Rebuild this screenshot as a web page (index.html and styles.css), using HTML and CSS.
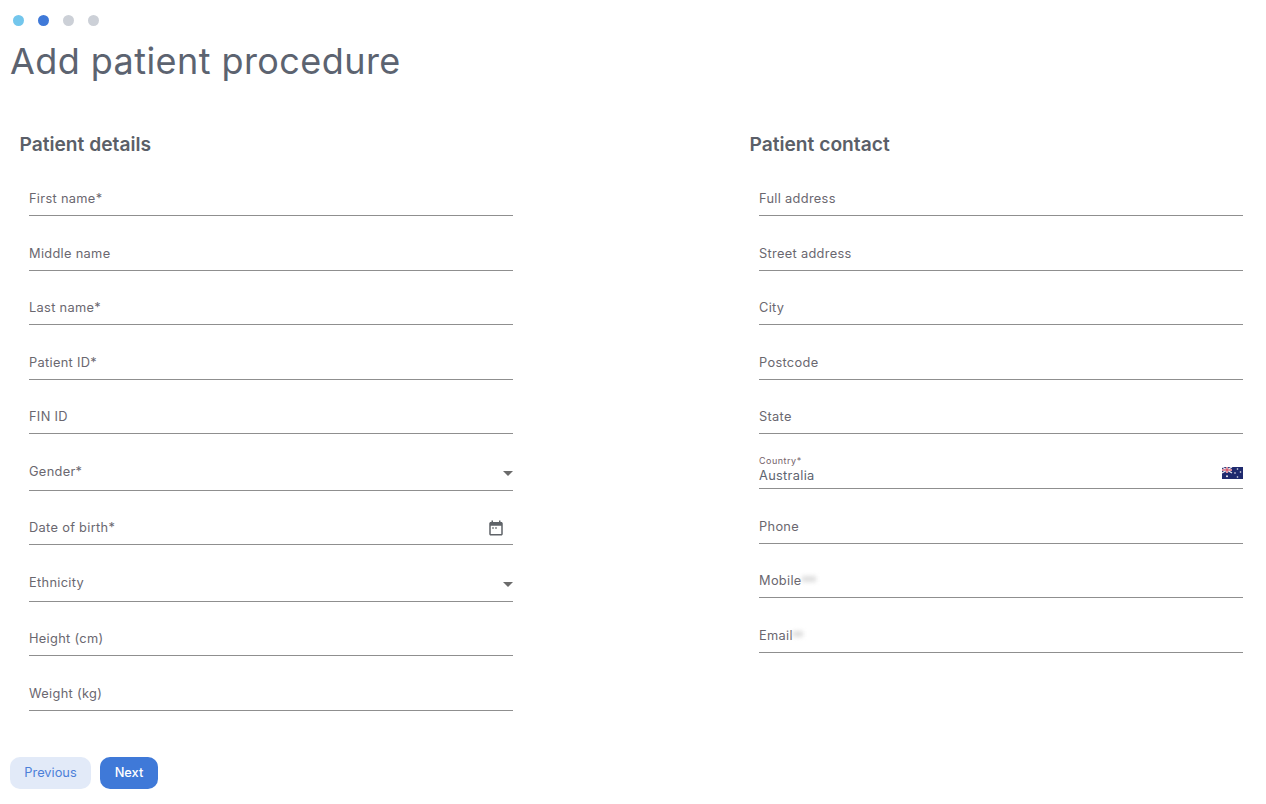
FILE: index.html
```html
<!DOCTYPE html>
<html lang="en">
  <head>
    <title>Add patient procedure</title>
    <link rel="stylesheet" href="styles.css">
  </head>
  <body>
    <div class="steps">
      <span class="dot dot-done"></span>
      <span class="dot dot-active"></span>
      <span class="dot"></span>
      <span class="dot"></span>
    </div>
    <h1>Add patient procedure</h1>

    <form class="columns">
      <section class="column">
        <h2>Patient details</h2>
        <div class="field"><span class="label">First name*</span></div>
        <div class="field"><span class="label">Middle name</span></div>
        <div class="field"><span class="label">Last name*</span></div>
        <div class="field"><span class="label">Patient ID*</span></div>
        <div class="field"><span class="label">FIN ID</span></div>
        <div class="field field-select">
          <span class="label">Gender*</span>
          <span class="caret"></span>
        </div>
        <div class="field">
          <span class="label">Date of birth*</span>
          <svg class="calendar" width="18" height="18" viewBox="0 0 24 24">
            <path fill="#5f6368" d="M9 11H7v2h2v-2zm10-7h-1V2h-2v2H8V2H6v2H5c-1.1 0-2 .9-2 2v14c0 1.1.9 2 2 2h14c1.1 0 2-.9 2-2V6c0-1.1-.9-2-2-2zm0 16H5V9h14v11zm-6-9h-2v2h2v-2z"/>
          </svg>
        </div>
        <div class="field field-select">
          <span class="label">Ethnicity</span>
          <span class="caret"></span>
        </div>
        <div class="field"><span class="label">Height (cm)</span></div>
        <div class="field"><span class="label">Weight (kg)</span></div>
      </section>

      <section class="column">
        <h2>Patient contact</h2>
        <div class="field"><span class="label">Full address</span></div>
        <div class="field"><span class="label">Street address</span></div>
        <div class="field"><span class="label">City</span></div>
        <div class="field"><span class="label">Postcode</span></div>
        <div class="field"><span class="label">State</span></div>
        <div class="field field-filled">
          <div class="filled-text">
            <span class="small-label">Country*</span>
            <span class="value">Australia</span>
          </div>
          <svg class="flag" width="21" height="12" viewBox="0 0 21 12">
            <rect width="21" height="12" fill="#1f2a6e"/>
            <path d="M0 0l10 6M10 0L0 6" stroke="#e8e8f0" stroke-width="1.4"/>
            <path d="M5 0v6M0 3h10" stroke="#e8e8f0" stroke-width="2.2"/>
            <path d="M5 0v6M0 3h10" stroke="#d0344a" stroke-width="1"/>
            <circle cx="5" cy="9.2" r="1" fill="#f0f0f5"/>
            <circle cx="15.5" cy="2" r=".8" fill="#f0f0f5"/>
            <circle cx="18.5" cy="5" r=".8" fill="#f0f0f5"/>
            <circle cx="13" cy="6" r=".8" fill="#f0f0f5"/>
            <circle cx="15.5" cy="10" r=".8" fill="#f0f0f5"/>
          </svg>
        </div>
        <div class="field"><span class="label">Phone</span></div>
        <div class="field">
          <span class="label">Mobile</span><span class="smudge smudge-wide"></span>
        </div>
        <div class="field">
          <span class="label">Email</span><span class="smudge"></span>
        </div>
      </section>
    </form>

    <div class="actions">
      <button type="button" class="btn btn-light">Previous</button>
      <button type="button" class="btn btn-primary">Next</button>
    </div>
  </body>
</html>
```

FILE: styles.css
```css
html,
body {
  height: 100%;
}

body {
  margin: 0;
  padding: 14.5px 10px 0;
  box-sizing: border-box;
  font-family: Inter, "Liberation Sans", sans-serif;
  background-color: white;
  color: #5b6472;
  overflow: hidden;
}

.steps {
  display: flex;
  gap: 14px;
  padding-left: 2.5px;
}

.dot {
  width: 11px;
  height: 11px;
  border-radius: 50%;
  background-color: #ccd0d7;
}

.dot-done {
  background-color: #73c6ec;
}

.dot-active {
  background-color: #3f79d8;
}

h1 {
  margin: 11.5px 0 0;
  font-size: 36px;
  line-height: 48px;
  font-weight: 400;
  letter-spacing: 0.43px;
  color: #5c6370;
}

.columns {
  display: grid;
  grid-template-columns: 493.5px 493.5px;
  column-gap: 236.5px;
  margin-top: 47px;
  padding-left: 9.5px;
}

h2 {
  margin: 0 0 5.5px;
  font-size: 19.2px;
  line-height: 24px;
  font-weight: 600;
  color: #5b5f68;
}

.field {
  display: flex;
  align-items: flex-end;
  justify-content: space-between;
  height: 54.5px;
  box-sizing: border-box;
  margin-left: 9.5px;
  padding-bottom: 8px;
  border-bottom: 1px solid #8f8f8f;
}

.field-select {
  height: 56.5px;
  padding-bottom: 10px;
}

.field-filled {
  height: 55px;
  padding-bottom: 4px;
}

.label {
  font-size: 12.8px;
  line-height: 17px;
  letter-spacing: 0.32px;
  color: #6a676f;
}

.small-label {
  display: block;
  margin-bottom: 1px;
  font-size: 9px;
  line-height: 11px;
  letter-spacing: 0.5px;
  color: #74626a;
}

.value {
  display: block;
  font-size: 12.8px;
  line-height: 17px;
  letter-spacing: 0.32px;
  color: #5e6470;
}

.caret {
  width: 0;
  height: 0;
  margin: 0 0 4px;
  border-left: 5px solid transparent;
  border-right: 5px solid transparent;
  border-top: 5px solid #6b6b6b;
}

.calendar {
  margin: 0 8px -1px 0;
}

.flag {
  margin-bottom: 5px;
}

.field:has(.smudge) {
  justify-content: flex-start;
}

.smudge {
  width: 10px;
  height: 6px;
  margin-bottom: 7px;
  background-color: #dedede;
  filter: blur(2px);
}

.smudge-wide {
  width: 14px;
}

.actions {
  display: flex;
  gap: 9px;
  margin-top: 46px;
}

.btn {
  height: 32px;
  padding: 0;
  border: none;
  border-radius: 10px;
  font-family: inherit;
  font-size: 12.8px;
  cursor: pointer;
}

.btn-light {
  width: 81px;
  background-color: #e2eaf8;
  color: #4c80d9;
  font-weight: 400;
}

.btn-primary {
  width: 58px;
  background-color: #3f79d8;
  color: white;
  font-weight: 500;
}
```
